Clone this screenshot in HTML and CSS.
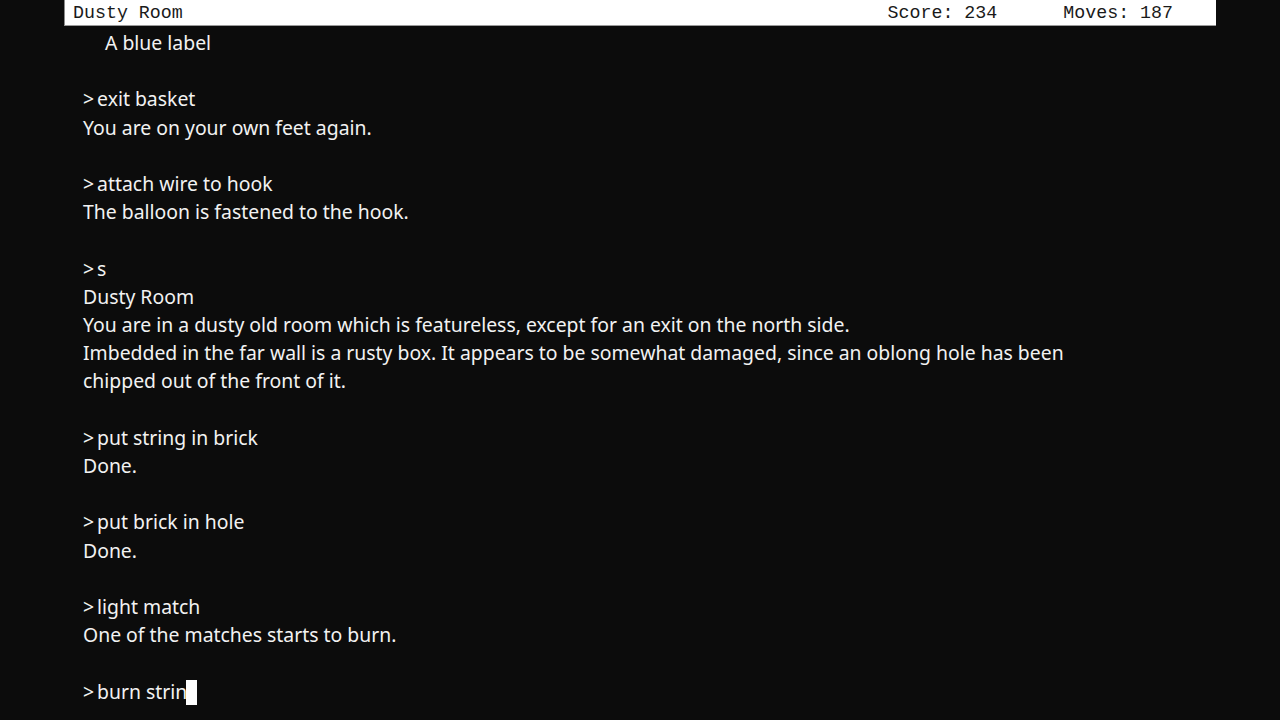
FILE: index.html
```html
<!DOCTYPE html>
<html lang="en">
<head>
    <meta charset="UTF-8">
    <meta name="viewport" content="width=device-width, initial-scale=1.0">
    <title>Dusty Room</title>
    <link rel="stylesheet" href="styles.css">
</head>
<body>
    <div class="game">
        <div class="status">
            <span class="location">Dusty Room</span>
            <span class="counters"><span>Score: 234</span><span>Moves: 187</span></span>
        </div>
        <div class="transcript">
            <p class="indent">A blue label</p>
            <p>&nbsp;</p>
            <p><span class="prompt">&gt;</span>exit basket</p>
            <p>You are on your own feet again.</p>
            <p>&nbsp;</p>
            <p><span class="prompt">&gt;</span>attach wire to hook</p>
            <p>The balloon is fastened to the hook.</p>
            <p>&nbsp;</p>
            <p><span class="prompt">&gt;</span>s</p>
            <p>Dusty Room</p>
            <p>You are in a dusty old room which is featureless, except for an exit on the north side.</p>
            <p>Imbedded in the far wall is a rusty box. It appears to be somewhat damaged, since an oblong hole has been chipped out of the front of it.</p>
            <p>&nbsp;</p>
            <p><span class="prompt">&gt;</span>put string in brick</p>
            <p>Done.</p>
            <p>&nbsp;</p>
            <p><span class="prompt">&gt;</span>put brick in hole</p>
            <p>Done.</p>
            <p>&nbsp;</p>
            <p><span class="prompt">&gt;</span>light match</p>
            <p>One of the matches starts to burn.</p>
            <p>&nbsp;</p>
            <p class="input"><span class="prompt">&gt;</span>burn strin<span class="cursor"></span></p>
        </div>
    </div>
</body>
</html>
```

FILE: styles.css
```css
body {
    margin: 0;
    background-color: #0c0c0c;
    color: #f2f2f2;
    overflow: hidden;
}
.game {
    width: 1152px;
    margin: 0 auto;
}
.status {
    display: flex;
    justify-content: space-between;
    align-items: center;
    height: 25px;
    background: #ffffff;
    color: #1a1a1a;
    border-left: 1px solid #8a8a8a;
    border-bottom: 1px solid #9a9a9a;
    font-family: 'Liberation Mono', monospace;
    font-size: 18.3px;
    padding: 0 43px 0 8px;
}
.counters {
    display: flex;
    gap: 66px;
}
.transcript {
    padding: 3px 0 0 19px;
    font-family: 'Noto Sans', sans-serif;
    font-size: 19.4px;
    line-height: 28.2px;
    width: 1010px;
}
.transcript p {
    margin: 0;
}
.indent {
    padding-left: 22px;
}
.prompt {
    padding-right: 3px;
}
.cursor {
    display: inline-block;
    width: 11px;
    height: 25px;
    margin-left: -1px;
    background: #ffffff;
    vertical-align: -6px;
}
```
